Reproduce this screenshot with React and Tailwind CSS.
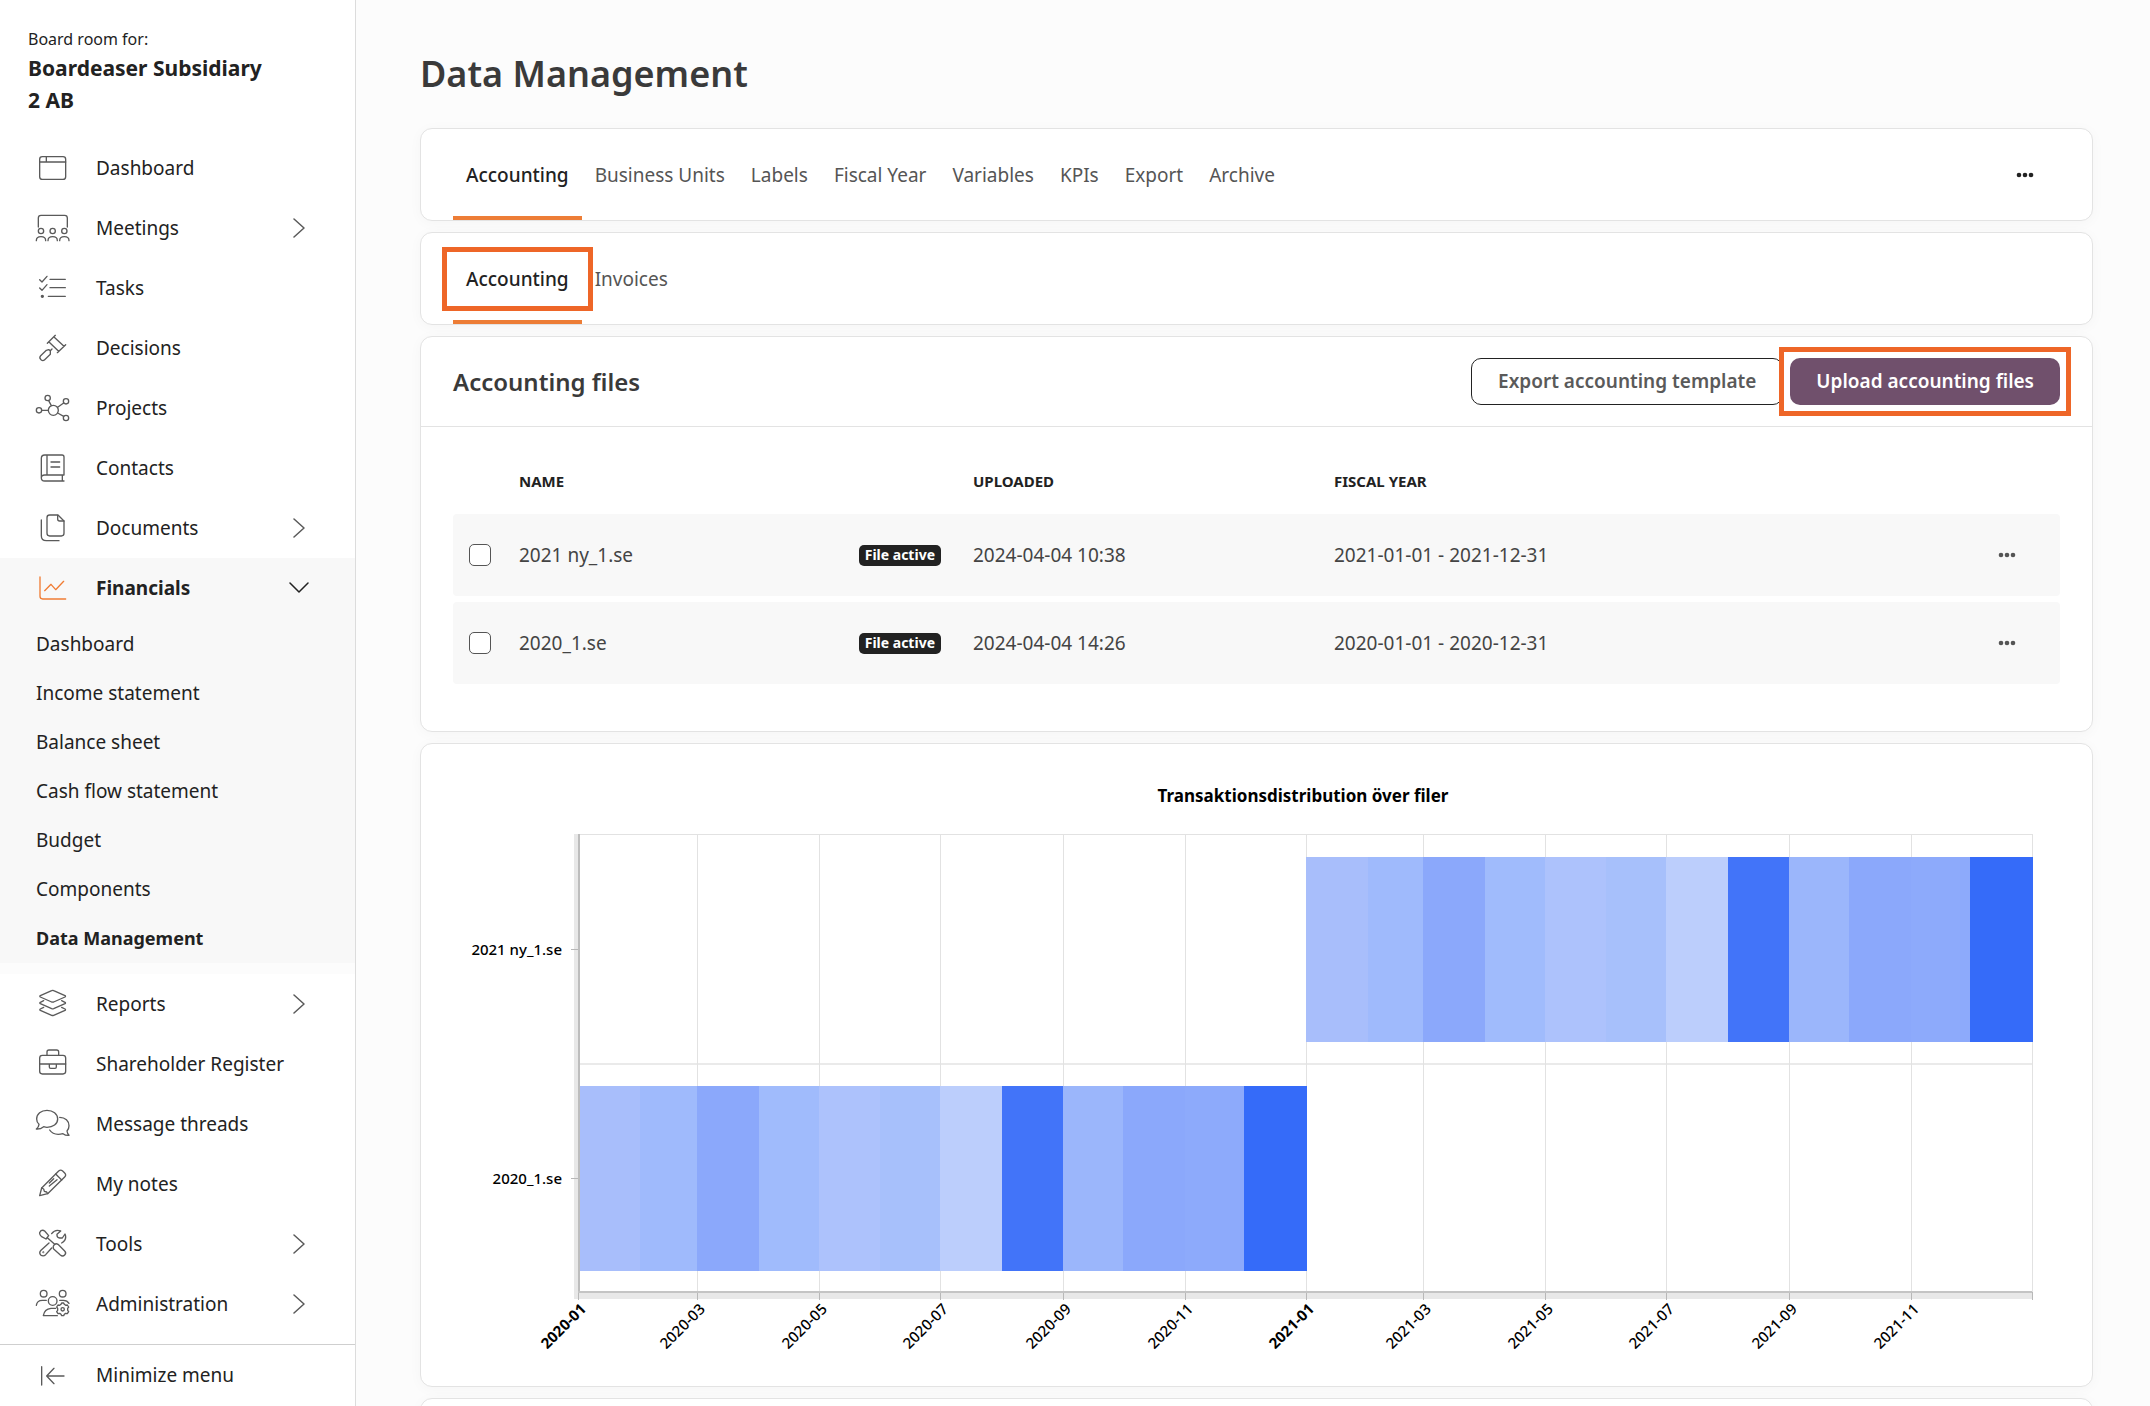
import React, { useState } from 'react';

const ICONS = {
  dashboard: (
    <>
      <rect x="14" y="11" width="78" height="68" rx="8" />
      <path d="M14 27H92M34 11V27" />
    </>
  ),
  meetings: (
    <>
      <path d="M10 42V15q0-8 8-8H89q8 0 8 8V42" />
      <circle cx="18" cy="54" r="8" />
      <circle cx="53" cy="54" r="8" />
      <circle cx="88" cy="54" r="8" />
      <path d="M4 83c0-8 5-12 14-12s14 4 14 12M39 83c0-8 5-12 14-12s14 4 14 12M74 83c0-8 5-12 14-12s14 4 14 12" />
    </>
  ),
  tasks: (
    <>
      <path d="M14 20l7 7 15-17M14 45l7 7 15-17M45 19H91M45 44H91M40 70H91" />
      <circle cx="22" cy="70" r="3" fill="currentColor" />
    </>
  ),
  decisions: (
    <>
      <path d="M37 31L61 7M67 59L92 35M42 27L71 55M57 12L87 40M51 48L46 53" />
      <path d="M34 52L17 68q-5 6 0 11l2 2q5 4 10-1L46 64V53L41 50z" />
    </>
  ),
  projects: (
    <>
      <circle cx="55" cy="52" r="15" />
      <circle cx="38" cy="15" r="8" />
      <circle cx="93" cy="25" r="8" />
      <circle cx="93" cy="75" r="8" />
      <circle cx="12" cy="52" r="8" />
      <path d="M41 23L49 38M86 30L68 43M86 70L68 60M20 52H40" />
    </>
  ),
  contacts: (
    <>
      <path d="M87 66V12q0-6-6-6H29q-10 0-10 10V75q0 9 10 9H87M19 75q0-9 10-9H87M82 66V84M36 6V66M48 27H74M48 42H74" />
    </>
  ),
  documents: (
    <>
      <path d="M44 6H69L87 24V61q0 8-8 8H44q-8 0-8-8V14q0-8 8-8z" />
      <path d="M68 7V18q0 6 6 6H87M19 21V68q0 15 15 15H72" />
    </>
  ),
  financials: <path d="M15 12V70q0 8 8 8H92M29 53L48 34L62 50L86 25" />,
  reports: (
    <path d="M50 5q3-2 6 0L90 20q3 2 0 4L56 39q-3 1-6 0L16 24q-3-2 0-4zM26 35L16 40q-3 2 0 4L50 59q3 1 6 0L90 44q3-2 0-4L80 35M26 55L16 60q-3 2 0 4L50 79q3 1 6 0L90 64q3-2 0-4L80 55" />
  ),
  briefcase: (
    <>
      <rect x="14" y="19" width="78" height="56" rx="8" />
      <path d="M36 19V9q0-6 6-6H65q6 0 6 6V19M14 45H92M43 45V54q0 4 4 4h13q4 0 4-4V45" />
    </>
  ),
  messages: (
    <>
      <path d="M12 46C7 42 5 36 5 30C5 15 18 4 36 4S68 15 68 30S54 55 36 55C32 55 29 54 26 53Q16 61 4 60Q11 55 12 46z" />
      <path d="M74 25C91 25 102 36 102 50C102 58 99 63 96 66Q97 74 102 79Q92 80 84 74C68 78 52 75 44 63" />
    </>
  ),
  notes: (
    <>
      <path d="M14 80L20 57L71 6q6-5 12 0l6 6q6 6 0 12L38 74z" />
      <path d="M62 15L80 33M20 57L26 60L28 67L35 69L38 74M43 42L56 29M43 51L66 32" />
    </>
  ),
  tools: (
    <>
      <path d="M18 5q6-3 11 1L41 20L33 30L20 23q-7-6-6-12zM37 26L59 46" />
      <path d="M58 47q5-5 11-1L89 66q6 6 0 12q-6 6-13 0L56 60q-4-6 2-13z" />
      <path d="M50 14Q60 0 77 6L66 16Q65 26 74 27L82 27L90 15Q97 32 80 42M42 42L18 64q-7 7-1 14q8 6 15-1L50 57" />
      <circle cx="25" cy="70" r="1" />
    </>
  ),
  administration: (
    <>
      <circle cx="26" cy="14" r="10" />
      <circle cx="83" cy="14" r="10" />
      <circle cx="53" cy="36" r="13" />
      <path d="M4 49q2-15 18-15H34M74 34h11q12 0 17 9M62 58H48q-20 2-23 22H67" />
      <path d="M78 46L80 42H86L88 46L92 49L97 48L101 54L98 58V64L101 68L97 74L92 73L88 76L86 80H80L78 76L74 73L69 74L65 68L68 64V58L65 54L69 48L74 49z" />
      <circle cx="83" cy="61" r="5" />
    </>
  ),
  minimize: <path d="M20 17V72M87 45H35M57 22L35 45L57 68" />,
};

const topMenu = [
  { label: 'Dashboard', icon: 'dashboard' },
  { label: 'Meetings', icon: 'meetings', expandable: true },
  { label: 'Tasks', icon: 'tasks' },
  { label: 'Decisions', icon: 'decisions' },
  { label: 'Projects', icon: 'projects' },
  { label: 'Contacts', icon: 'contacts' },
  { label: 'Documents', icon: 'documents', expandable: true },
];

const financialsMenu = [
  'Dashboard',
  'Income statement',
  'Balance sheet',
  'Cash flow statement',
  'Budget',
  'Components',
  'Data Management',
];

const bottomMenu = [
  { label: 'Reports', icon: 'reports', expandable: true },
  { label: 'Shareholder Register', icon: 'briefcase' },
  { label: 'Message threads', icon: 'messages' },
  { label: 'My notes', icon: 'notes' },
  { label: 'Tools', icon: 'tools', expandable: true },
  { label: 'Administration', icon: 'administration', expandable: true },
];

const tabs = ['Accounting', 'Business Units', 'Labels', 'Fiscal Year', 'Variables', 'KPIs', 'Export', 'Archive'];

const files = [
  { name: '2021 ny_1.se', uploaded: '2024-04-04 10:38', year: '2021-01-01 - 2021-12-31' },
  { name: '2020_1.se', uploaded: '2024-04-04 14:26', year: '2020-01-01 - 2020-12-31' },
];

const Icon = ({ name }) => (
  <svg
    viewBox="0 0 108 90"
    className="w-[36px] h-[30px] shrink-0"
    fill="none"
    stroke="currentColor"
    strokeWidth="4"
    strokeLinecap="round"
    strokeLinejoin="round"
    aria-hidden="true"
  >
    {ICONS[name]}
  </svg>
);

const Chevron = ({ open }) => (
  <svg
    viewBox="0 0 20 20"
    className="w-5 h-5 ml-auto shrink-0"
    fill="none"
    stroke="currentColor"
    strokeWidth="1.5"
    strokeLinecap="round"
    strokeLinejoin="round"
    aria-hidden="true"
  >
    <path d={open ? 'M1 5L10 14L19 5' : 'M5 1L15 10L5 19'} />
  </svg>
);

const Dots = () => (
  <svg viewBox="0 0 18 6" className="w-[18px] h-[6px]" fill="currentColor" aria-hidden="true">
    <circle cx="3" cy="3" r="2.3" />
    <circle cx="9" cy="3" r="2.3" />
    <circle cx="15" cy="3" r="2.3" />
  </svg>
);

const MenuItem = ({ label, icon, expandable }) => (
  <a href="#" className="flex items-center gap-[25px] h-[60px] pl-[35px] pr-[46px] text-[#5a5a5a]">
    <Icon name={icon} />
    <span className="text-[#222] whitespace-nowrap">{label}</span>
    {expandable && <Chevron />}
  </a>
);

const Sidebar = () => (
  <aside className="w-[356px] h-screen shrink-0 flex flex-col bg-white border-r border-[#dcdcdc] text-[19px] text-[#222]">
    <div className="pt-[26px] pl-[28px] pr-20 h-[138px]">
      <p className="text-[16px] leading-[26px]">Board room for:</p>
      <p className="text-[21px] leading-[32px] font-bold">Boardeaser Subsidiary 2 AB</p>
    </div>
    <nav>
      {topMenu.map((item) => (
        <MenuItem key={item.label} {...item} />
      ))}
      <div className="bg-[#f8f8f8]">
        <a href="#" className="flex items-center gap-[25px] h-[60px] mb-[2px] pl-[35px] pr-[46px]">
          <span className="text-[#f07c34]">
            <Icon name="financials" />
          </span>
          <span className="font-bold">Financials</span>
          <Chevron open />
        </a>
        {financialsMenu.map((label) => (
          <a
            key={label}
            href="#"
            className={`flex items-center h-[49px] pl-[36px] ${
              label === 'Data Management' ? 'font-bold text-[18px]' : ''
            }`}
          >
            {label}
          </a>
        ))}
      </div>
      <div className="h-[11px] bg-[#fcfcfc]" />
      {bottomMenu.map((item) => (
        <MenuItem key={item.label} {...item} />
      ))}
    </nav>
    <div className="mt-auto border-t border-[#cfcfcf]">
      <button type="button" className="flex items-center gap-[25px] h-[61px] w-full pl-[35px] text-[#5a5a5a]">
        <Icon name="minimize" />
        <span className="text-[#222]">Minimize menu</span>
      </button>
    </div>
  </aside>
);

const Card = ({ className = '', children }) => (
  <section
    className={`bg-white border border-[#e3e3e3] rounded-xl shadow-[0_2px_14px_rgba(0,0,0,0.03)] ${className}`}
  >
    {children}
  </section>
);

const Tab = ({ label, active, highlighted, onClick }) => (
  <button
    type="button"
    onClick={onClick}
    className={`relative h-full px-[13px] border-b-4 pt-[5px] ${
      active ? 'font-medium text-[#222] border-[#ed7d36]' : 'text-[#555] border-transparent'
    }`}
  >
    {label}
    {highlighted && <span className="absolute -inset-x-[11px] top-[14px] h-16 border-[5px] border-[#ee6628]" />}
  </button>
);

// Months start on real calendar days, so the bars differ slightly in width
const plot = { left: 157, right: 1611, top: 90, middle: 320, bottom: 548 };
const DAY = 86400000;
const start = Date.UTC(2020, 0, 1);
const totalDays = (Date.UTC(2022, 0, 1) - start) / DAY;
const monthX = (index) =>
  Math.round(plot.left + ((Date.UTC(2020, index, 1) - start) / DAY / totalDays) * (plot.right - plot.left));

const monthColors = [
  '#a8befb', '#9fbafc', '#8ba8fb', '#a0bbfc', '#adc2fc', '#a7c0fb',
  '#bccefc', '#4274f9', '#9bb6fb', '#8ba8fb', '#8daafb', '#356bf9',
];

const chartRows = [
  { label: '2021 ny_1.se', y: 113, firstMonth: 12 },
  { label: '2020_1.se', y: 342, firstMonth: 0 },
];

const gridMonths = [0, 2, 4, 6, 8, 10, 12, 14, 16, 18, 20, 22];

const DistributionChart = () => (
  <svg viewBox="0 0 1671 642" className="block w-full h-auto" role="img" aria-label="Transaktionsdistribution över filer">
    <text x="882" y="58" textAnchor="middle" className="text-[17px] font-bold">
      Transaktionsdistribution över filer
    </text>

    <rect x={plot.left - 4} y={plot.top} width="4" height={plot.bottom - plot.top + 7} fill="#e8e8e8" />
    <rect x={plot.left - 4} y={plot.bottom} width={plot.right - plot.left + 5} height="7" fill="#e8e8e8" />
    <path d={`M${plot.left} ${plot.top}.5H${plot.right}`} stroke="#e2e2e2" />
    <path d={`M${plot.left} ${plot.middle}H${plot.right}`} stroke="#eaeaea" strokeWidth="2" />
    {[...gridMonths, 24].map((m) => (
      <g key={m}>
        <path d={`M${monthX(m)}.5 ${plot.top}V${plot.bottom}`} stroke="#e2e2e2" />
        <path d={`M${monthX(m)}.5 ${plot.bottom}v8`} stroke="#b8b8b8" />
      </g>
    ))}

    {chartRows.map((row) => (
      <g key={row.label}>
        {monthColors.map((color, i) => {
          const x = monthX(row.firstMonth + i);
          return (
            <rect key={i} x={x} y={row.y} width={monthX(row.firstMonth + i + 1) - x + 1} height="185" fill={color} />
          );
        })}
        <path d={`M${plot.left - 7} ${row.y + 92}.5h7`} stroke="#b8b8b8" />
        <text x="141" y={row.y + 98} textAnchor="end" className="text-[15px] font-medium">
          {row.label}
        </text>
      </g>
    ))}

    <path d={`M${plot.left + 1} ${plot.top}V${plot.bottom}`} stroke="#bdbdbd" strokeWidth="2" />
    <path d={`M${plot.left} ${plot.bottom}H${plot.right}`} stroke="#c4c4c4" strokeWidth="2" />

    {gridMonths.map((m) => {
      const label = `${2020 + Math.floor(m / 12)}-${String((m % 12) + 1).padStart(2, '0')}`;
      return (
        <text
          key={m}
          transform={`translate(${monthX(m) + 9} 566) rotate(-45)`}
          textAnchor="end"
          className={m % 12 === 0 ? 'text-[15px] font-bold' : 'text-[15px] font-medium'}
        >
          {label}
        </text>
      );
    })}
  </svg>
);

const App = () => {
  const [activeTab, setActiveTab] = useState('Accounting');
  const [activeSubTab, setActiveSubTab] = useState('Accounting');

  return (
    <div className="flex h-screen overflow-hidden bg-[#fcfcfc] font-['Noto_Sans',sans-serif]">
      <Sidebar />

      <main className="flex-1 min-w-0 pl-16 pr-[57px] overflow-hidden">
        <h1 className="h-32 pt-[48px] text-[36px] leading-[52px] font-semibold text-[#3a3a3a]">Data Management</h1>

        <div className="flex flex-col gap-[11px]">
          <Card className="h-[93px] pl-8 pr-[58px] flex items-center justify-between text-[19px]">
            <div className="flex h-full">
              {tabs.map((tab) => (
                <Tab key={tab} label={tab} active={tab === activeTab} onClick={() => setActiveTab(tab)} />
              ))}
            </div>
            <button type="button" aria-label="More options" className="text-[#222]">
              <Dots />
            </button>
          </Card>

          <Card className="h-[93px] pl-8 flex text-[19px]">
            {['Accounting', 'Invoices'].map((tab) => (
              <Tab
                key={tab}
                label={tab}
                active={tab === activeSubTab}
                highlighted={tab === 'Accounting'}
                onClick={() => setActiveSubTab(tab)}
              />
            ))}
          </Card>

          <Card className="h-[396px]">
            <div className="flex items-center justify-between h-[90px] px-8 border-b border-[#e3e3e3]">
              <h2 className="text-[24px] font-semibold text-[#3a3a3a]">Accounting files</h2>
              <div className="flex gap-[7px] text-[19px] font-semibold">
                <button type="button" className="h-[47px] px-[26px] rounded-[10px] border border-[#222] text-[#5a5a5a]">
                  Export accounting template
                </button>
                <div className="relative">
                  <button type="button" className="h-[47px] px-[26px] rounded-[10px] bg-[#70506c] text-white">
                    Upload accounting files
                  </button>
                  <span className="absolute -inset-[11px] border-[5px] border-[#ee6628] pointer-events-none" />
                </div>
              </div>
            </div>

            <div className="px-8 pt-[21px]">
              <table className="w-full table-fixed border-separate border-spacing-x-0 border-spacing-y-[6px] text-left">
                <thead>
                  <tr className="h-[54px] text-[15px] text-[#222]">
                    <th className="w-[66px]" />
                    <th className="w-[454px] font-bold">NAME</th>
                    <th className="w-[361px] font-bold">UPLOADED</th>
                    <th className="font-bold">FISCAL YEAR</th>
                    <th className="w-[62px]" />
                  </tr>
                </thead>
                <tbody>
                  {files.map((file) => (
                    <tr key={file.name} className="h-[82px] bg-[#f8f8f8] text-[19px] text-[#444]">
                      <td className="pl-4 rounded-l-sm">
                        <input
                          type="checkbox"
                          aria-label={`Select ${file.name}`}
                          className="block appearance-none size-[22px] bg-white border border-[#555] rounded-[5px] checked:bg-[#70506c]"
                        />
                      </td>
                      <td>
                        <div className="flex items-center justify-between pr-8">
                          {file.name}
                          <span className="h-[21px] px-[6px] rounded-[5px] bg-[#222] text-white text-[14px] leading-5 font-bold">
                            File active
                          </span>
                        </div>
                      </td>
                      <td>{file.uploaded}</td>
                      <td>{file.year}</td>
                      <td className="rounded-r-sm">
                        <button type="button" aria-label={`Options for ${file.name}`} className="block text-[#555]">
                          <Dots />
                        </button>
                      </td>
                    </tr>
                  ))}
                </tbody>
              </table>
            </div>
          </Card>

          <Card>
            <DistributionChart />
          </Card>

          <Card className="h-[93px]" />
        </div>
      </main>
    </div>
  );
};

export default App;
